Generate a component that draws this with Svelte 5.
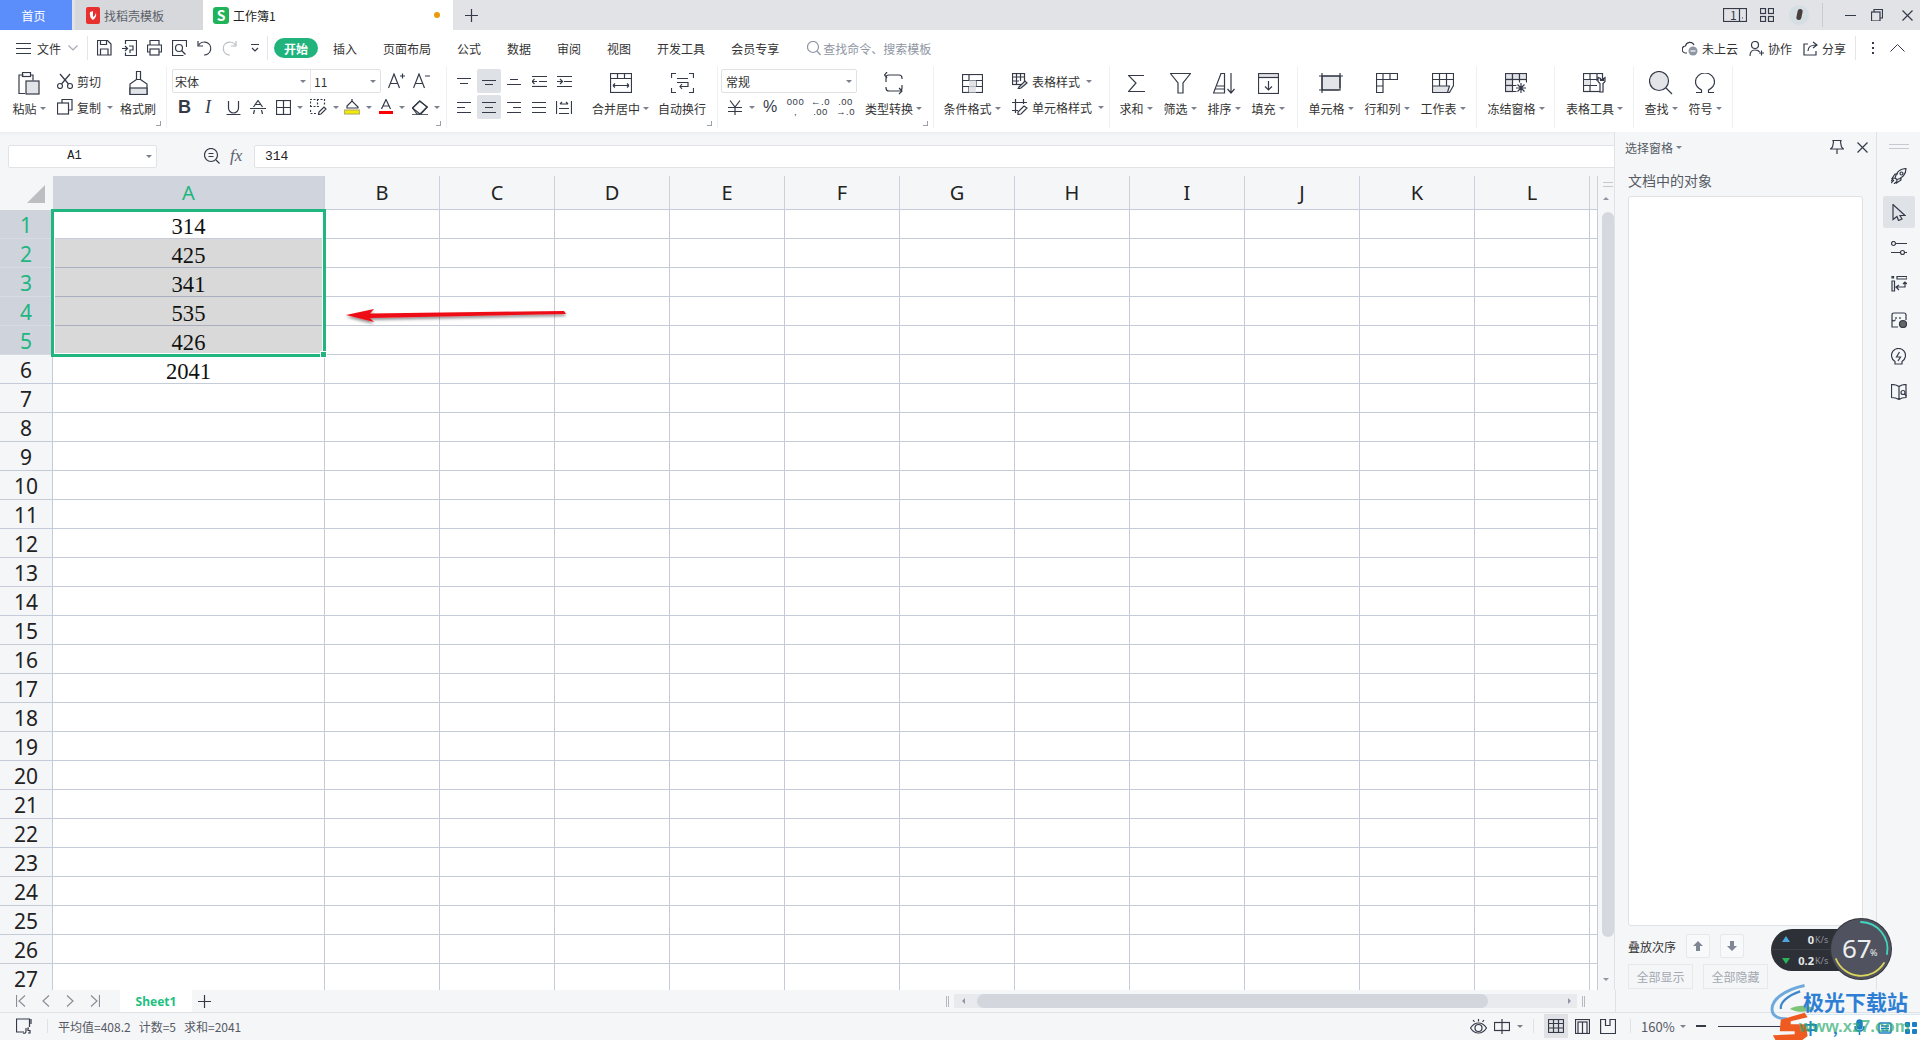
<script>
  const COLS = ['A', 'B', 'C', 'D', 'E', 'F', 'G', 'H', 'I', 'J', 'K', 'L', ''];
  const VALUES = [314, 425, 341, 535, 426, 2041];
  const ROWS = Array.from({ length: 27 }, (_, i) => i + 1);
  const MENU = ['插入', '页面布局', '公式', '数据', '审阅', '视图', '开发工具', '会员专享'];
  const GRAY = '#e2e4e8';

  const ICONS = {
    menu: '<path d="M0 2.5h15M0 7.5h15M0 12.5h15"/>',
    save: '<path d="M.5.5h10l3.5 3.5v11H.5z"/><path d="M3.5.5v4h6v-4M3.5 15v-6h7.500v6"/>',
    saveas: '<path d="M3.500 4V.5h11v15h-11v-3"/><path d="M0 8.500h5M3 6l2.500 2.500L3 11"/><path d="M7 6h4v4H8v3"/>',
    print: '<path d="M3 5V.5h9V5M3 12H.5V5h14v7H12"/><rect x="3" y="9" width="9" height="6"/>',
    preview: '<path d="M14.500 7V.5H.5v15h11"/><circle cx="7" cy="8" r="3.500"/><path d="M9.500 10.500l4 4"/>',
    undo: '<path d="M1 1v5h5"/><path d="M1.500 5.500A6.500 6.500 0 1 1 7 15"/>',
    redo: '<path d="M14 1v5H9"/><path d="M13.500 5.500A6.500 6.500 0 1 0 8 15"/>',
    more: '<path d="M0 .5h8M1 4l3 3 3-3"/>',
    cloud: `<path d="M5 12H4a3.500 3.500 0 0 1-.5-7A4.500 4.500 0 0 1 12 4"/><circle cx="11" cy="10" r="4.500" fill="#8f96a3" stroke="none"/><path d="M8.500 10h5" stroke="#fff"/>`,
    person: '<circle cx="6" cy="4" r="3.500"/><path d="M1 15c0-4 2-6 5-6s4 1 4.500 2M10 12h5M12.500 9.500v5"/>',
    share: '<path d="M5 3H1v11h12v-4"/><path d="M5 10c0-4 3-6 8-6M10 1l4 3-4 3"/>',
    paste: `<path d="M5.500 3H1v18.500h6M12.500 3H15v5.500"/><rect x="4.500" y=".5" width="8" height="4"/><rect x="8" y="9" width="13" height="13" fill="${GRAY}"/>`,
    cut: '<circle cx="3" cy="13" r="2.500"/><circle cx="13" cy="13" r="2.500"/><path d="M4.500 11L13 1M11.500 11L3 1"/>',
    copy: `<path d="M5 4V.5h10V11h-3.500"/><rect x=".5" y="4" width="11" height="11"/>`,
    brush: `<path d="M7.500 .5h4v8h-4zM7.500 8.500L1 13v10.500h17V13l-6.500-4.500"/><rect x="1" y="17" width="17" height="6.500" fill="${GRAY}"/>`,
    aplus: '<path d="M.5 15L6 1l5.500 14M2.500 10.500h7M12 3h5M14.500 .5v5"/>',
    aminus: '<path d="M.5 15L6 1l5.500 14M2.500 10.500h7M12 3h5"/>',
    under: '<path d="M2.500 1v7a5 5 0 0 0 10 0V1M.5 14.500h14"/>',
    strike: '<path d="M3.500 7L8 .5 12.500 7M3.500 14l1-4M12.500 14l-1-4M5.500 4.500h5M0 8.500h16"/>',
    border: '<rect x=".5" y=".5" width="14" height="14"/><path d="M7.500 0v15M0 7.500h15"/>',
    cellstyle: '<path d="M.5 8V.5h14v6M.5 11v3.500H6M7.500 0v8M0 7.500h9" stroke-dasharray="2 1.500"/><path d="M9 13l5-5 2 2-5 5-2.500.5z"/>',
    fill: `<path d="M3 7l5-5 6 6v1H3z"/><path d="M8 0v3"/><rect x=".5" y="11" width="15" height="4" fill="#f4e900" stroke="#b9b26a"/>`,
    fontcolor: '<path d="M2.500 10L7 .5l4.500 9.500M4 7h6" fill="none"/><path d="M0 13.500h14" stroke="#f00" stroke-width="3"/>',
    eraser: `<path d="M.5 9l7-7 8 6-6.500 7H5z"/><path d="M.5 9L8 15l7-7-7-6z" fill="none"/><path d="M0 15.500h16" stroke-width=".8"/>`,
    atop: '<path d="M0 .5h14M3 5.500h8"/>',
    amid: '<path d="M0 3.500h14M3 7.500h8"/>',
    abot: '<path d="M3 2.500h8M0 7.500h14"/>',
    indl: '<path d="M0 .5h15M7 5.500h8M0 5.500h5M2.500 3L0 5.500 2.500 8"/><path d="M0 10.500h15" />',
    indr: '<path d="M0 .5h15M0 5.500h5M3 3l2.500 2.500L3 8M7 5.500h8M0 10.500h15"/>',
    left: '<path d="M0 .5h14M0 5.500h8M0 10.500h14"/>',
    center: '<path d="M0 .5h14M3 5.500h8M0 10.500h14"/>',
    right: '<path d="M0 .5h14M6 5.500h8M0 10.500h14"/>',
    just: '<path d="M0 .5h14M0 5.500h14M0 10.500h14"/>',
    dist: '<path d="M.5 0v13M15.500 0v13M3 12.500h10M3 7.500h10M4 3h8M4 3l2-2M12 3l-2-2"/>',
    merge: '<rect x=".5" y=".5" width="21" height="19"/><path d="M0 5.500h22M7.500 0v5.500M14.500 0v5.500M3 12.500h16M3 12.500l2-2M3 12.500l2 2M19 12.500l-2-2M19 12.500l-2 2"/>',
    wrap: '<path d="M5 .5H.5V5M18 .5h4.500V5M.5 15v4.500H5M22.500 15v4.500H18M6 5.500h11M6 9.500h11v4H9M11 11l-2 2.500 2 2.500"/>',
    yuan: '<path d="M3 .5l5 6.500 5-6.500M1 7.500h14M1 11.500h14M8 7v8"/>',
    convert: '<path d="M2 10V5.500Q2 3 5 3h10q3 0 3 3v1M3 0L.5 3 3 6"/><path d="M18 13v3q0 3-3 3H5q-3 0-3-3v-1M15 16l3 3-3 3"/>',
    cond: `<rect x=".5" y=".5" width="20" height="18"/><path d="M0 6.500h21M0 12.500h21M7 0v6.500M14 6.500V13M7 13v6"/><rect x="7" y="6.500" width="7" height="6" fill="${GRAY}" stroke="none"/><rect x="7" y="12.500" width="7" height="6" fill="${GRAY}" stroke="none"/>`,
    tstyle: '<rect x=".5" y=".5" width="12" height="11"/><path d="M4.500 0v11M8.500 0v8M0 4h12M0 8h7"/><path d="M7 14l6-6 2 2-6 5-3 1z" fill="#e2e4e8"/>',
    ustyle: '<path d="M3.500 0v14M11.500 0v5M0 3.500h15M0 11.500h6"/><path d="M6 13l6-6 3 2-6 6-3 .5z"/>',
    sum: '<path d="M16 .5H.5L8 8 .5 16.500H17"/>',
    filter: '<path d="M.5 .5h20L13 10v10H8V10z"/>',
    sort: `<path d="M.5 20L8 .5h3.500V20z"/><path d="M4 13h7.500M2 16h9.500" /><path d="M18 0v19.500M14.500 16l3.500 4 3.500-4"/>`,
    fillbtn: `<rect x=".5" y=".5" width="20" height="20"/><rect x=".5" y=".5" width="20" height="4" fill="${GRAY}"/><path d="M10.500 8v9M7 13.500l3.500 3.500 3.500-3.500"/>`,
    cell: `<rect x="3" y="3" width="18" height="14" fill="${GRAY}"/><path d="M0 3h24M0 17h20M3 0v20M21 0v15"/>`,
    rowcol: `<path d="M.5 .5h21v6H7v13H.5zM.5 6.500H7M7 0v6.500M14 0v6.500M0 13h7"/>`,
    sheet: `<path d="M.5 .5h21v12l-4 7H.5z"/><path d="M.5 13h17l-2 6.500H.5z" fill="${GRAY}"/><path d="M7.500 0v13M14.500 0v13M0 6.500h21"/>`,
    freeze: `<rect x=".5" y=".5" width="7" height="6" fill="${GRAY}"/><rect x="7.500" y=".5" width="7" height="6" fill="${GRAY}"/><rect x="14.500" y=".5" width="7" height="6" fill="${GRAY}"/><rect x=".5" y="6.500" width="7" height="6" fill="${GRAY}"/><rect x=".5" y="12.500" width="7" height="6" fill="${GRAY}"/><path d="M7.500 18.500h4M21.500 6.500v3M7.500 12.500h4M14.500 6.500v3M16 10v10M11 15h10M12.500 11.500l7 7M19.500 11.500l-7 7"/>`,
    ttools: `<rect x=".5" y=".5" width="19" height="18"/><path d="M0 6.500h20M0 12.500h14M7 0v19M14 0v8"/><rect x="1" y="7" width="6" height="5" fill="${GRAY}" stroke="none"/><path d="M15 4.500v4l2 2V19h3v-8.500l2-2v-4l-1.500 1v2h-3v-2z" fill="#fff"/>`,
    find: `<circle cx="10" cy="10" r="9.500" fill="${GRAY}"/><path d="M17 17l6 6"/>`,
    omega: '<path d="M1 19.500h5.500v-2.500C3 15 .5 12.500 .5 9a9.500 9 0 0 1 19 0c0 3.500-2.500 6-6 8v2.500H19"/>',
    zoomf: '<circle cx="7" cy="7" r="6.500"/><path d="M4.500 5.500h5M4.500 8.500h5M12 12l3.500 3.500"/>',
    pin: '<path d="M3 .5h8l-.5 1.500 1 5 2 2H.5l2-2 1-5zM7 9.500V14"/>',
    close: '<path d="M.5 .5l10 10M10.500 .5l-10 10"/>',
    rocket: '<path d="M4 10C5 5 9 1 15 .5c0 6-4 10-9 11zM4 10l-3 .5 3-4.500h3M6 11.500L5.500 15l4.500-3V9"/><circle cx="10.500" cy="5.500" r="1.500"/><path d="M0 15l3-3M2 11l-2 2M5 14l-2 2"/>',
    cursor: '<path d="M1 .5v15l4-3 1.500 4 3.500-1.500-2-3.500h5z"/>',
    sliders: '<circle cx="2.500" cy="2.500" r="2"/><circle cx="11.500" cy="11.500" r="2"/><path d="M5 2.500h11M0 11.500h9M14 11.500h2"/>',
    swap: '<path d="M1 .5h1.500V2H1zM1 5h2.500v10H1zM6 .5h10V3H6zM5 11h9V6M12 8l2-2 2 2M8 9l-3 2 3 3"/>',
    shop: '<path d="M1 8V3q0-2 2-2h10q2 0 2 2v5M1 8v7h6M1 8q2 2 3.500-.5M5 5v2M9 5v2"/><circle cx="12" cy="12" r="3.500" fill="#666"/>',
    bolt: '<path d="M4 13.500a7 7 0 1 1 7 0V16H4zM8.500 4L5.500 9h4l-2.500 4"/>',
    book: '<path d="M8 2.500C6 1 3 .5.5 .5v13c2.500 0 5 .5 7.500 2 2-1.500 4-2 7-2V.5c-3 0-5 .5-7 2zM8 2.500v13"/><circle cx="12" cy="8.500" r="2" /><path d="M13.500 10l2 2"/>',
    first: '<path d="M.5 0v12M9 .5L3 6l6 5.500"/>',
    prev: '<path d="M7 .5L1 6l6 5.500"/>',
    next: '<path d="M1 .5L7 6l-6 5.500"/>',
    last: '<path d="M9.500 0v12M1 .5L7 6l-6 5.500"/>',
    plus: '<path d="M6.500 0v13M0 6.500h13"/>',
    macro: '<path d="M8 14H.5V1h13v8M15 1v5"/><path d="M7 15q3 1 3-2v-3M13 10h-1v2.500h2V15h-2"/>',
    eye: '<path d="M.5 9C3 5 5.500 4 8.500 4s5.500 1 8 5c-2.500 4-5 5-8 5s-5.500-1-8-5zM8.500 0v2.500M3 1l1.500 2M14 1l-1.500 2"/><circle cx="8.500" cy="9" r="3.500"/>',
    ime: '<rect x=".5" y="3.500" width="15" height="8"/><path d="M8 0v15"/>',
    vnormal: '<rect x=".5" y=".5" width="15" height="13"/><path d="M0 4.500h16M0 9h16M5.500 0v14M10.500 0v14"/>',
    vlayout: '<rect x=".5" y=".5" width="14" height="14"/><rect x="3" y="3" width="9" height="12" /><path d="M7.500 3v12"/>',
    vbreak: '<path d="M.5 14.500V.5h5v6H10V.5h5.500v14z"/><path d="M.5 .5v14"/>',
    boxone: '<rect x=".5" y=".5" width="23" height="13"/><path d="M16.500 0v14"/><path d="M19 10h1"/>',
    grid4: '<rect x=".5" y=".5" width="5" height="5"/><rect x="8.500" y=".5" width="5" height="5"/><rect x=".5" y="8.500" width="5" height="5"/><rect x="8.500" y="8.500" width="5" height="5"/>',
    restore: '<path d="M3 3V.5h8.500V9H9"/><rect x=".5" y="3" width="8.500" height="9"/>'
  };
</script>

{#snippet ic(name, w, h, cls = '')}
  <svg class="ic {cls}" width={w} height={h} viewBox="0 0 {w} {h}" fill="none" stroke="#343a48" stroke-width="1.2">{@html ICONS[name]}</svg>
{/snippet}

{#snippet big(label, icon, w, iw, ih, caret = true)}
  <div class="big" style:width="{w}px">
    <div class="big-icon">{@render ic(icon, iw, ih)}</div>
    <div class="big-label">{label}{#if caret}<i class="caret"></i>{/if}</div>
  </div>
{/snippet}

{#snippet tbtn(icon, w, h, caret = false, cw = 34)}
  <div class="tbtn" style:width="{cw}px">{@render ic(icon, w, h)}{#if caret}<i class="caret"></i>{/if}</div>
{/snippet}

<div class="app">
  <header class="tabs">
    <div class="tab home">首页</div>
    <div class="tab tpl">
      <svg class="ic" width="14" height="17" viewBox="0 0 14 17"><rect width="14" height="17" rx="2" fill="#e8302f"/><path d="M4 5q-1 5 3 8 4-3 3-7-1 3-3 4 0-3 0-6-2 1-3 1z" fill="#fff"/></svg>
      找稻壳模板
    </div>
    <div class="tab book"><span class="s-logo">S</span>工作簿1<span class="dot"></span></div>
    <div class="newtab">{@render ic('plus', 13, 13)}</div>
    <div class="win">
      <div class="boxone">{@render ic('boxone', 24, 14)}<span>1</span></div>
      {@render ic('grid4', 14, 14)}
      <div class="avatar"><span></span></div>
      <div class="vline"></div>
      <div class="minbtn"></div>
      {@render ic('restore', 12, 12)}
      {@render ic('close', 11, 11)}
    </div>
  </header>

  <nav class="menubar">
    <div class="filemenu">{@render ic('menu', 15, 15)}<span>文件</span><svg class="ic" width="10" height="6" viewBox="0 0 10 6" fill="none" stroke="#a2a7b0" stroke-width="1.100"><path d="M.5 .5L5 5 9.500 .5"/></svg></div>
    <div class="mline one"></div>
    <div class="quick">
      {@render ic('save', 15, 16)}
      {@render ic('saveas', 15, 16)}
      {@render ic('print', 15, 16)}
      {@render ic('preview', 15, 16)}
      {@render ic('undo', 15, 16)}
      <svg class="ic" width="15" height="16" viewBox="0 0 15 16" fill="none" stroke="#b8bcc4" stroke-width="1.200">{@html ICONS.redo}</svg>
      {@render ic('more', 8, 8)}
    </div>
    <div class="mline"></div>
    <div class="pill">开始</div>
    <div class="menu-items">
      {#each MENU as m}<span>{m}</span>{/each}
    </div>
    <div class="search">
      <svg class="ic" width="14" height="15" viewBox="0 0 14 15" fill="none" stroke="#8f96a3" stroke-width="1.200"><circle cx="6" cy="6" r="5.500"/><path d="M10 10l3.500 4"/></svg>
      查找命令、搜索模板
    </div>
    <div class="actions">
      <span class="act">{@render ic('cloud', 16, 15)}未上云</span>
      <span class="act">{@render ic('person', 15, 15)}协作</span>
      <span class="act">{@render ic('share', 15, 15)}分享</span>
      <div class="mline act-line"></div>
      <span class="dots"></span>
      <svg class="ic" width="15" height="8" viewBox="0 0 15 8" fill="none" stroke="#343a48" stroke-width="1"><path d="M.5 7.500L7.500 .5l7 7"/></svg>
    </div>
  </nav>

  <section class="ribbon">
    <div class="grp g1">
      {@render big('粘贴', 'paste', 40, 22, 23)}
      <div class="smalls cutcol">
        <div class="sm">{@render ic('cut', 16, 16)}<span>剪切</span></div>
        <div class="sm">{@render ic('copy', 16, 16)}<span>复制</span><i class="caret"></i></div>
      </div>
      {@render big('格式刷', 'brush', 44, 19, 24, false)}
      <i class="launch"></i>
    </div>

    <div class="grp g2">
      <div class="smalls">
        <div class="fontrow">
          <div class="selectbox font">
            <div class="sel-a">宋体<i class="caret"></i></div>
            <div class="sel-b">11<i class="caret"></i></div>
          </div>
          <div class="fontsize">{@render ic('aplus', 18, 16)}{@render ic('aminus', 18, 16)}</div>
        </div>
        <div class="fmtrow">
          <span class="bold-b">B</span>
          <span class="ital-i">I</span>
          {@render tbtn('under', 15, 15, false, 24)}
          {@render tbtn('strike', 16, 15, false, 26)}
          {@render tbtn('border', 15, 15, true, 34)}
          {@render tbtn('cellstyle', 17, 16, true, 34)}
          {@render tbtn('fill', 16, 16, true, 35)}
          {@render tbtn('fontcolor', 14, 16, true, 33)}
          {@render tbtn('eraser', 16, 16, true, 34)}
        </div>
      </div>
      <i class="launch"></i>
    </div>

    <div class="grp g3">
      <div class="aligns">
        <div class="ab">{@render ic('atop', 14, 7)}</div>
        <div class="ab on">{@render ic('amid', 14, 9)}</div>
        <div class="ab">{@render ic('abot', 14, 9)}</div>
        <div class="ab">{@render ic('indl', 15, 11)}</div>
        <div class="ab">{@render ic('indr', 15, 11)}</div>
        <div class="ab">{@render ic('left', 14, 11)}</div>
        <div class="ab on">{@render ic('center', 14, 11)}</div>
        <div class="ab">{@render ic('right', 14, 11)}</div>
        <div class="ab">{@render ic('just', 14, 11)}</div>
        <div class="ab">{@render ic('dist', 16, 13)}</div>
      </div>
      {@render big('合并居中', 'merge', 69, 22, 20)}
      {@render big('自动换行', 'wrap', 54, 23, 20, false)}
      <i class="launch"></i>
    </div>

    <div class="grp g4">
      <div class="smalls numcol">
        <div class="selectbox num">常规<i class="caret"></i></div>
        <div class="numrow">
          {@render tbtn('yuan', 16, 15, true, 36)}
          <span class="pct">%</span>
          <span class="dec thou">000<br />,</span>
          <span class="dec">←.0<br />.00</span>
          <span class="dec">.00<br />→.0</span>
        </div>
      </div>
      {@render big('类型转换', 'convert', 69, 20, 23)}
      <i class="launch"></i>
    </div>

    <div class="grp g5">
      {@render big('条件格式', 'cond', 70, 21, 19)}
      <div class="smalls">
        <div class="sm">{@render ic('tstyle', 16, 16)}<span>表格样式</span><i class="caret"></i></div>
        <div class="sm">{@render ic('ustyle', 16, 16)}<span>单元格样式</span><i class="caret"></i></div>
      </div>
    </div>

    <div class="grp g6">
      {@render big('求和', 'sum', 44, 17, 17)}
      {@render big('筛选', 'filter', 44, 21, 21)}
      {@render big('排序', 'sort', 44, 22, 21)}
      {@render big('填充', 'fillbtn', 44, 21, 21)}
    </div>
    <div class="grp g7">
      {@render big('单元格', 'cell', 56, 24, 20)}
      {@render big('行和列', 'rowcol', 56, 22, 20)}
      {@render big('工作表', 'sheet', 56, 22, 20)}
    </div>
    <div class="grp g8">{@render big('冻结窗格', 'freeze', 78, 22, 21)}</div>
    <div class="grp g9">{@render big('表格工具', 'ttools', 79, 23, 20)}</div>
    <div class="grp g10">
      {@render big('查找', 'find', 44, 24, 24)}
      {@render big('符号', 'omega', 44, 20, 20)}
    </div>
  </section>

  <section class="formula">
    <div class="namebox">A1<i class="caret"></i></div>
    {@render ic('zoomf', 16, 16)}
    <span class="fx">fx</span>
    <div class="finput">314</div>
  </section>

  <main class="workspace">
    <div class="sheetcol">
      <div class="gridwrap">
        <div class="grid">
          <div class="corner"><span></span></div>
          {#each COLS as c, i}
            <div class="colh" class:sel={i === 0}>{c}</div>
          {/each}
          {#each ROWS as r}
            <div class="rowh" class:sel={r <= 5}>{r}</div>
            {#each COLS as c, i}
              <div class="cell" class:gray={i === 0 && r >= 2 && r <= 5}>{i === 0 && VALUES[r - 1] ? VALUES[r - 1] : ''}</div>
            {/each}
          {/each}
        </div>
        <div class="selection"><span class="handle"></span></div>
        <svg class="arrow" width="226" height="24" viewBox="0 0 226 24">
          <defs><filter id="sh" x="-5%" y="-50%" width="110%" height="220%"><feDropShadow dx="0" dy="2" stdDeviation="1.500" flood-color="#000" flood-opacity=".45"/></filter></defs>
          <polygon points="2,11 30,5 26,9.500 220,7 222,10 26,14 30,18" fill="#ee0f16" filter="url(#sh)"/>
        </svg>
      </div>
      <div class="vscroll">
        <span class="grip"></span>
        <i class="up"></i>
        <span class="thumb"></span>
        <i class="down"></i>
      </div>
    </div>

    <aside class="pane">
      <div class="pane-head"><span>选择窗格</span><i class="caret"></i><span class="pane-tools">{@render ic('pin', 14, 15)}{@render ic('close', 11, 11)}</span></div>
      <div class="pane-title">文档中的对象</div>
      <div class="pane-list"></div>
      <div class="order">
        <span>叠放次序</span>
        <b class="ordb"><svg width="12" height="12" viewBox="0 0 12 12"><path d="M6 1l5 5H8v5H4V6H1z" fill="#7f8794"/></svg></b>
        <b class="ordb"><svg width="12" height="12" viewBox="0 0 12 12"><path d="M6 11l5-5H8V1H4v5H1z" fill="#7f8794"/></svg></b>
      </div>
      <div class="showrow"><span>全部显示</span><span>全部隐藏</span></div>
    </aside>

    <aside class="rail">
      <span class="rail-grip"></span>
      <div class="rb">{@render ic('rocket', 16, 16)}</div>
      <div class="rb on">{@render ic('cursor', 14, 17)}</div>
      <div class="rb">{@render ic('sliders', 16, 14)}</div>
      <div class="rb">{@render ic('swap', 16, 16)}</div>
      <div class="rb">{@render ic('shop', 16, 16)}</div>
      <div class="rb">{@render ic('bolt', 15, 17)}</div>
      <div class="rb">{@render ic('book', 16, 16)}</div>
    </aside>
  </main>

  <div class="sheetbar">
    <div class="sheetbar-in">
      <div class="sheetnav">
        {@render ic('first', 10, 12)}
        {@render ic('prev', 8, 12)}
        {@render ic('next', 8, 12)}
        {@render ic('last', 10, 12)}
      </div>
      <div class="sheettab">Sheet1</div>
      {@render ic('plus', 13, 13)}
      <div class="hscroll">
        <span class="hgrip"></span>
        <div class="htrack"><i class="hl"></i><span class="hthumb"></span><i class="hr"></i></div>
        <span class="hgrip"></span>
      </div>
    </div>
  </div>

  <footer class="status">
    {@render ic('macro', 16, 16)}
    <div class="stline"></div>
    <div class="sttext"><span>平均值=408.2</span><span>计数=5</span><span>求和=2041</span></div>
    <div class="stright">
      {@render ic('eye', 17, 15)}
      <div class="imebtn">{@render ic('ime', 16, 15)}<i class="caret"></i></div>
      <div class="stline"></div>
      <div class="views">
        <div class="vb on">{@render ic('vnormal', 16, 14)}</div>
        <div class="vb">{@render ic('vlayout', 15, 15)}</div>
        <div class="vb">{@render ic('vbreak', 16, 15)}</div>
      </div>
      <div class="stline"></div>
      <div class="zoomval">160%<i class="caret"></i></div>
      <span class="zminus"></span>
      <span class="zline"></span>
    </div>
  </footer>

  <div class="speed">
    <div class="speed-pill">
      <div class="sp-row"><i class="sp-up"></i><b>0</b><em>K/s</em></div>
      <div class="sp-row"><i class="sp-down"></i><b>0.2</b><em>K/s</em></div>
    </div>
    <div class="speed-dial">
      <svg width="60" height="60" viewBox="0 0 60 60" fill="none" stroke-width="1.800" stroke-linecap="round">
        <path d="M30 3A27 27 0 0 1 56 35" stroke="#41d7bf"/>
        <path d="M53 44A27 27 0 0 1 5 40" stroke="#dcd75a"/>
      </svg>
      <span class="pctnum">67</span><span class="pctsign">%</span>
    </div>
  </div>

  <div class="ime-bar">
    <b>中</b><span class="ime-comma">,</span>
    <svg width="11" height="17" viewBox="0 0 11 17" fill="none" stroke="#1d7fc4" stroke-width="1.500"><rect x="3" y="1" width="5" height="9" rx="2.500" fill="#1d7fc4"/><path d="M1 7q0 5 4.500 5T10 7M5.500 12v4"/></svg>
    <svg width="14" height="12" viewBox="0 0 14 12" fill="none" stroke="#1d7fc4" stroke-width="1.500"><rect x="1" y="1" width="12" height="10" rx="1"/><path d="M3 4h8M3 6.500h8M4 9h6"/></svg>
    <svg width="12" height="12" viewBox="0 0 12 12" fill="#1d7fc4"><rect width="5" height="5" rx="1"/><rect x="7" width="5" height="5" rx="1"/><rect y="7" width="5" height="5" rx="1"/><rect x="7" y="7" width="5" height="5" rx="1"/></svg>
  </div>
  <div class="mark">
    <svg class="mark-logo" width="70" height="76" viewBox="0 0 70 76" fill="none">
      <path d="M48 2C20 8 2 22 4 36c1 8 10 12 20 11" stroke="#6fa9dc" stroke-width="4"/>
      <path d="M42 10C24 16 14 26 16 34" stroke="#3d86cc" stroke-width="3"/>
      <path d="M28 34c10-6 24-6 34 0-8 4-22 6-34 0z" fill="#7cc576"/>
      <path d="M22 48l24-9 3 6-17 5v4h15l2 15-6 6-26 0-3-7 22-1v-4H21z" fill="#ee5a1f" transform="translate(-14 -2) scale(1.350 1.050)"/>
    </svg>
    <span class="mark-name">极光下载站</span>
    <span class="mark-url">www.xz7.com</span>
  </div>
</div>

<style>
  :global(body) {
    margin: 0;
    background: #fff;
    font-family: "Noto Sans CJK SC", "Noto Sans", sans-serif;
  }

  .app {
    position: relative;
    display: flex;
    flex-direction: column;
    width: 1920px;
    height: 1040px;
    overflow: hidden;
    font-size: 12px;
    color: #3b3f48;
  }

  .ic {
    display: block;
    flex-shrink: 0;
  }

  .caret {
    display: inline-block;
    flex-shrink: 0;
    width: 0;
    height: 0;
    margin-left: 3px;
    border-left: 3px solid transparent;
    border-right: 3px solid transparent;
    border-top: 3px solid #7b818c;
    vertical-align: middle;
  }

  /* title tabs */
  .tabs {
    display: flex;
    flex-shrink: 0;
    height: 30px;
    background: #e1e3e7;
  }

  .tab {
    display: flex;
    align-items: center;
    height: 30px;
    box-sizing: border-box;
  }

  .home {
    justify-content: center;
    width: 72px;
    margin-right: 3px;
    padding-right: 5px;
    background: #5c8efb;
    color: #fff;
  }

  .tpl {
    width: 128px;
    padding-left: 11px;
    background: #d6d8dc;
    color: #5b6068;
    gap: 4px;
  }

  .book {
    position: relative;
    width: 250px;
    padding-left: 10px;
    background: #fff;
    color: #222;
    gap: 4px;
  }

  .s-logo {
    display: flex;
    align-items: center;
    justify-content: center;
    width: 16px;
    height: 17px;
    border-radius: 3px;
    background: #1fb45a;
    color: #fff;
    font-size: 14px;
    font-weight: 700;
    line-height: 1;
  }

  .dot {
    width: 6px;
    height: 6px;
    margin-left: auto;
    margin-right: 13px;
    border-radius: 50%;
    background: #e89c0c;
  }

  .newtab {
    display: flex;
    align-items: center;
    margin-left: 12px;
  }

  .win {
    display: flex;
    align-items: center;
    margin-left: auto;
    margin-right: 7px;
    gap: 13px;
  }

  .boxone {
    position: relative;
  }

  .boxone span {
    position: absolute;
    left: 7px;
    top: -2px;
    font-size: 12px;
    color: #343a48;
  }

  .avatar {
    position: relative;
    width: 20px;
    height: 20px;
    margin-left: 2px;
    overflow: hidden;
    border-radius: 50%;
    background: #d5dfe3;
  }

  .avatar span {
    position: absolute;
    left: 8px;
    top: 4px;
    width: 5px;
    height: 11px;
    border-radius: 3px;
    background: #4a3d3e;
    transform: rotate(12deg);
  }

  .vline {
    width: 1px;
    height: 24px;
    background: #c8cbd0;
  }

  .minbtn {
    width: 11px;
    height: 1px;
    margin-left: 9px;
    margin-right: 2px;
    background: #343a48;
  }

  .win > :global(svg:last-child) {
    margin-left: 6px;
  }

  /* menu row */
  .menubar {
    display: flex;
    flex-shrink: 0;
    align-items: center;
    height: 34px;
    padding: 2px 0 0 16px;
    box-sizing: border-box;
    background: #fff;
    color: #333;
  }

  .filemenu {
    display: flex;
    align-items: center;
    gap: 6px;
  }

  .filemenu svg:last-child {
    margin-left: 1px;
  }

  .mline {
    width: 1px;
    height: 24px;
    background: #e3e5e8;
  }

  .mline.one {
    margin-left: 9px;
  }

  .quick {
    display: flex;
    align-items: center;
    gap: 10px;
    margin: 0 8px 0 9px;
  }

  .quick :global(svg:last-child) {
    margin-left: 4px;
  }

  .pill {
    display: flex;
    align-items: center;
    justify-content: center;
    width: 44px;
    height: 20px;
    margin-left: 6px;
    border-radius: 10px;
    background: #20b47c;
    color: #fff;
    font-weight: 700;
  }

  .menu-items {
    display: flex;
    gap: 26px;
    margin-left: 15px;
  }

  .search {
    display: flex;
    align-items: center;
    gap: 2px;
    margin-left: 28px;
    color: #8f96a3;
  }

  .actions {
    display: flex;
    align-items: center;
    margin-left: auto;
    margin-right: 15px;
    gap: 11px;
  }

  .act {
    display: flex;
    align-items: center;
    gap: 4px;
  }

  .act-line {
    margin-left: -2px;
  }

  .dots {
    width: 2px;
    height: 2px;
    margin: 0 5px 0 5px;
    background: #343a48;
    box-shadow: 0 -5px 0 #343a48, 0 5px 0 #343a48;
  }

  /* ribbon */
  .ribbon {
    display: flex;
    flex-shrink: 0;
    height: 68px;
    background: #fff;
    box-sizing: border-box;
    color: #333;
  }

  .grp {
    position: relative;
    display: flex;
    box-sizing: border-box;
    height: 62px;
    margin-top: 2px;
    padding-top: 3px;
    border-right: 1px solid #eff0f2;
  }

  .g1 { width: 167px; padding-left: 9px; }
  .g2 { width: 280px; padding-left: 5px; }
  .g3 { width: 271px; padding-left: 5px; }
  .g4 { width: 216px; padding-left: 3px; }
  .g5 { width: 176px; padding-left: 3px; }
  .g6 { width: 188px; padding-left: 4px; }
  .g7 { width: 179px; padding-left: 5px; }
  .g8 { width: 78px; }
  .g9 { width: 79px; }
  .g10 { width: 99px; padding-left: 5px; border-right-color: #eff0f2; }

  .big {
    display: flex;
    flex-direction: column;
    align-items: center;
    flex-shrink: 0;
  }

  .big-icon {
    display: flex;
    align-items: center;
    justify-content: center;
    height: 28px;
  }

  .big-label {
    display: flex;
    align-items: center;
    height: 22px;
    white-space: nowrap;
  }

  .smalls {
    display: flex;
    flex-direction: column;
    gap: 2px;
  }

  .sm {
    display: flex;
    align-items: center;
    height: 24px;
    gap: 4px;
    white-space: nowrap;
  }

  .sm .caret {
    margin-left: 2px;
  }

  .cutcol {
    width: 59px;
    margin-left: 8px;
  }

  .launch {
    position: absolute;
    right: 5px;
    bottom: 2px;
    width: 4px;
    height: 4px;
    border-right: 1px solid #9ba1ab;
    border-bottom: 1px solid #9ba1ab;
  }

  .selectbox {
    display: flex;
    align-items: center;
    box-sizing: border-box;
    height: 24px;
    border: 1px solid #dfe1e5;
    border-radius: 2px;
    background: #fff;
  }

  .fontrow {
    display: flex;
    height: 24px;
  }

  .font {
    width: 209px;
  }

  .sel-a,
  .sel-b {
    display: flex;
    align-items: center;
    justify-content: space-between;
    padding: 0 4px 0 2px;
    box-sizing: border-box;
  }

  .sel-a {
    width: 138px;
    height: 22px;
    border-right: 1px solid #e4e6e9;
  }

  .sel-b {
    width: 69px;
    padding-left: 3px;
  }

  .fontsize {
    display: flex;
    align-items: center;
    gap: 7px;
    margin-left: 7px;
  }

  .fmtrow {
    display: flex;
    align-items: center;
    height: 24px;
  }

  .bold-b {
    width: 27px;
    padding-left: 6px;
    box-sizing: border-box;
    color: #343a48;
    font: 700 18px "Liberation Sans", sans-serif;
  }

  .ital-i {
    width: 27px;
    padding-left: 6px;
    box-sizing: border-box;
    color: #343a48;
    font: italic 400 18px "Liberation Serif", serif;
  }

  .tbtn {
    display: flex;
    align-items: center;
    gap: 3px;
    flex-shrink: 0;
  }

  .aligns {
    display: grid;
    grid-template-columns: repeat(5, 25px);
    grid-auto-rows: 24px;
    row-gap: 2px;
    width: 126px;
    margin-right: 8px;
    padding-left: 0;
  }

  .ab {
    display: flex;
    align-items: center;
    justify-content: center;
    width: 24px;
    border-radius: 2px;
  }

  .ab.on {
    background: #dee1e5;
  }

  .numcol {
    width: 140px;
  }

  .num {
    justify-content: space-between;
    width: 136px;
    padding: 0 4px;
  }

  .numrow {
    display: flex;
    align-items: center;
    height: 24px;
    padding-left: 6px;
  }

  .pct {
    width: 20px;
    color: #343a48;
    font: 16px "Liberation Sans", sans-serif;
  }

  .dec {
    width: 25px;
    color: #343a48;
    font: 9.500px/10px "Liberation Sans", sans-serif;
    letter-spacing: .5px;
    text-align: center;
  }

  .thou {
    font-weight: 400;
  }

  .g4 .big {
    margin-left: -2px;
  }

  .g5 .smalls {
    margin-left: 5px;
  }

  /* formula bar */
  .formula {
    display: flex;
    flex-shrink: 0;
    align-items: center;
    height: 44px;
    padding: 4px 0 0 8px;
    box-sizing: border-box;
    background: linear-gradient(#eceef0 0, #f5f6f8 4px);
  }

  .namebox {
    position: relative;
    display: flex;
    align-items: center;
    justify-content: center;
    width: 149px;
    height: 23px;
    margin-right: 47px;
    padding-right: 16px;
    box-sizing: border-box;
    border: 1px solid #e1e3e6;
    border-radius: 2px;
    background: #fff;
    color: #222;
    font: 12px "Liberation Mono", monospace;
  }

  .namebox .caret {
    position: absolute;
    right: 4px;
    top: 9px;
  }

  .fx {
    margin: 0 8px 0 10px;
    width: 16px;
    color: #5a606c;
    font: italic 17px "Liberation Serif", serif;
  }

  .finput {
    display: flex;
    align-items: center;
    width: 1362px;
    height: 23px;
    padding-left: 10px;
    box-sizing: border-box;
    border: 1px solid #e1e3e6;
    border-radius: 2px;
    background: #fff;
    color: #222;
    font: 13px "Liberation Mono", monospace;
  }

  /* sheet */
  .workspace {
    display: flex;
    flex-shrink: 0;
    height: 814px;
    background: #f5f6f8;
  }

  .sheetcol {
    display: flex;
    width: 1614px;
    box-sizing: border-box;
  }

  .gridwrap {
    position: relative;
    width: 1598px;
    overflow: hidden;
  }

  .grid {
    display: grid;
    grid-template-columns: 53px 272px repeat(11, 115px) 8px;
    grid-template-rows: 34px;
    grid-auto-rows: 29px;
  }

  .corner {
    display: flex;
    align-items: flex-end;
    justify-content: flex-end;
    padding: 0 7px 7px 0;
    border-right: 1px solid transparent;
  }

  .corner span {
    width: 0;
    height: 0;
    border-left: 18px solid transparent;
    border-bottom: 18px solid #bcbec2;
  }

  .colh {
    display: flex;
    align-items: center;
    justify-content: center;
    box-sizing: border-box;
    border-right: 1px solid #cdd1dc;
    border-bottom: 1px solid #c6cbd9;
    color: #222;
    font: 20px "Noto Sans", sans-serif;
  }

  .colh.sel {
    background: #d0d4dc;
    color: #21b67f;
  }

  .rowh {
    display: flex;
    align-items: center;
    justify-content: center;
    box-sizing: border-box;
    padding-top: 1px;
    border-right: 1px solid #c6cbd9;
    border-bottom: 1px solid #c6cbd9;
    color: #222;
    font: 21px "Noto Sans", sans-serif;
  }

  .rowh.sel {
    background: #cfd3dc;
    border-bottom-color: #d8dbe3;
    color: #21b67f;
  }

  .cell {
    display: flex;
    align-items: flex-end;
    justify-content: center;
    box-sizing: border-box;
    border-right: 1px solid #c6cbd9;
    border-bottom: 1px solid #c6cbd9;
    background: #fff;
    color: #111;
    font: 22.600px/23px "Liberation Serif", serif;
  }

  .cell.gray {
    background: #d9d9d9;
    border-bottom-color: #a9afc0;
  }

  .selection {
    position: absolute;
    left: 51px;
    top: 33px;
    width: 275px;
    height: 148px;
    box-sizing: border-box;
    border: 3px solid #21b67f;
    box-shadow: inset 0 0 0 1px #fff;
  }

  .handle {
    position: absolute;
    right: -4px;
    bottom: -4px;
    width: 5px;
    height: 5px;
    border: 1px solid #fff;
    background: #21b67f;
  }

  .arrow {
    position: absolute;
    left: 344px;
    top: 128px;
  }

  .vscroll {
    position: relative;
    width: 16px;
    background: #f5f6f8;
  }

  .grip,
  .rail-grip {
    position: absolute;
    height: 3px;
    border-top: 1px solid #c6cad0;
    border-bottom: 1px solid #c6cad0;
  }

  .grip {
    left: 5px;
    top: 6px;
    width: 10px;
  }

  .up,
  .down {
    position: absolute;
    left: 5px;
    width: 0;
    height: 0;
    border-left: 3px solid transparent;
    border-right: 3px solid transparent;
  }

  .up {
    top: 21px;
    border-bottom: 3px solid #8f96a3;
  }

  .down {
    top: 802px;
    border-top: 3px solid #8f96a3;
  }

  .thumb {
    position: absolute;
    left: 4px;
    top: 36px;
    width: 12px;
    height: 725px;
    border-radius: 6px;
    background: #d5d8de;
  }

  /* task pane */
  .pane {
    display: flex;
    flex-direction: column;
    width: 262px;
    margin-top: -44px;
    box-sizing: border-box;
    padding: 4px 13px 0;
    border-left: 1px solid #e0e2e6;
    background: #f5f6f8;
  }

  .pane-head {
    display: flex;
    align-items: center;
    height: 22px;
    margin-left: -3px;
    color: #555a64;
  }

  .pane-tools {
    display: flex;
    align-items: center;
    gap: 13px;
    margin-left: auto;
    margin-right: -5px;
  }

  .pane-title {
    margin-top: 10px;
    height: 24px;
    color: #555a64;
    font-size: 14px;
    line-height: 24px;
  }

  .pane-list {
    width: 235px;
    height: 730px;
    margin-top: 4px;
    flex-shrink: 0;
    box-sizing: border-box;
    border: 1px solid #dfe1e5;
    border-radius: 3px;
    background: #fff;
  }

  .order {
    display: flex;
    align-items: center;
    height: 24px;
    margin-top: 8px;
    color: #333;
  }

  .ordb {
    display: flex;
    align-items: center;
    justify-content: center;
    width: 22px;
    height: 22px;
    margin-left: 10px;
    border: 1px solid #e6e8eb;
    border-radius: 2px;
    background: #f8f9fa;
  }

  .showrow {
    display: flex;
    gap: 10px;
    margin-top: 6px;
  }

  .showrow span {
    display: flex;
    align-items: center;
    justify-content: center;
    width: 63px;
    height: 23px;
    border: 1px solid #e6e8eb;
    color: #a3a8b0;
  }

  .rail {
    position: relative;
    display: flex;
    flex-direction: column;
    align-items: center;
    width: 44px;
    margin-top: -44px;
    padding-top: 28px;
    box-sizing: border-box;
    border-left: 1px solid #e0e2e6;
    background: #f5f6f8;
  }

  .rail-grip {
    left: 12px;
    top: 12px;
    width: 20px;
  }

  .rb {
    display: flex;
    align-items: center;
    justify-content: center;
    width: 32px;
    height: 32px;
    margin-bottom: 4px;
    border-radius: 2px;
  }

  .rb.on {
    background: #dfe2e7;
  }

  /* sheet tab row */
  .sheetbar {
    flex-shrink: 0;
    height: 22px;
    background: #f5f6f8;
  }

  .sheetbar-in {
    display: flex;
    align-items: center;
    height: 22px;
    width: 1616px;
    box-sizing: border-box;
    border-right: 1px solid #e0e2e6;
  }

  .sheetnav {
    display: flex;
    align-items: center;
    width: 104px;
    padding-left: 16px;
    gap: 16px;
    opacity: .55;
  }

  .sheettab {
    display: flex;
    align-items: center;
    justify-content: center;
    width: 72px;
    height: 22px;
    background: #fff;
    color: #21c07f;
    font: 700 12px "Noto Sans", sans-serif;
    margin-right: 6px;
  }

  .hscroll {
    display: flex;
    align-items: center;
    gap: 5px;
    margin-left: 735px;
  }

  .hgrip {
    width: 3px;
    height: 11px;
    border-left: 1px solid #b5b9c0;
    border-right: 1px solid #b5b9c0;
    box-sizing: border-box;
  }

  .htrack {
    position: relative;
    width: 623px;
    height: 14px;
    background: #e8eaee;
  }

  .hl,
  .hr {
    position: absolute;
    top: 4px;
    width: 0;
    height: 0;
    border-top: 3px solid transparent;
    border-bottom: 3px solid transparent;
  }

  .hl {
    left: 8px;
    border-right: 3px solid #8f96a3;
  }

  .hr {
    right: 6px;
    border-left: 3px solid #8f96a3;
  }

  .hthumb {
    position: absolute;
    left: 23px;
    top: 0;
    width: 511px;
    height: 14px;
    border-radius: 7px;
    background: #d3d6dc;
  }

  /* status */
  .status {
    display: flex;
    flex-shrink: 0;
    align-items: center;
    height: 28px;
    padding: 0 0 1px 16px;
    box-sizing: border-box;
    border-top: 1px solid #e0e2e6;
    background: #f5f6f8;
    color: #555a64;
  }

  .stline {
    width: 1px;
    height: 14px;
    margin: 0 10px 0 15px;
    background: #e0e2e6;
  }

  .sttext {
    display: flex;
    gap: 8px;
  }

  .stright {
    display: flex;
    align-items: center;
    margin-left: auto;
    width: 450px;
  }

  .stright > :global(svg:first-child) {
    margin-right: 7px;
  }

  .imebtn {
    display: flex;
    align-items: center;
    gap: 4px;
  }

  .stright .stline {
    margin: 0 10px 0 10px;
    height: 14px;
  }

  .views {
    display: flex;
    gap: 2px;
  }

  .vb {
    display: flex;
    align-items: center;
    justify-content: center;
    width: 24px;
    height: 24px;
  }

  .vb.on {
    background: #dfe1e5;
  }

  .zoomval {
    display: flex;
    align-items: center;
    gap: 2px;
    font-size: 13px;
  }

  .zminus {
    width: 10px;
    height: 2px;
    margin-left: 10px;
    background: #343a48;
  }

  .zline {
    width: 100px;
    height: 1px;
    margin-left: 12px;
    background: #343a48;
  }

  /* floating things */
  .speed {
    position: absolute;
    left: 1771px;
    top: 919px;
    display: flex;
    align-items: center;
    width: 122px;
    height: 62px;
  }

  .speed-pill {
    display: flex;
    flex-direction: column;
    width: 80px;
    height: 42px;
    padding-right: 20px;
    box-sizing: border-box;
    border-radius: 21px 0 0 21px;
    background: #2d3037;
  }

  .sp-row {
    display: flex;
    align-items: center;
    height: 21px;
    padding-left: 11px;
    box-sizing: border-box;
    color: #e8eaec;
  }

  .sp-row:first-child {
    border-bottom: 1px solid #3c3f46;
  }

  .sp-row b {
    margin-left: auto;
    font: 700 11px "Noto Sans", sans-serif;
  }

  .sp-row em {
    width: 16px;
    margin-left: 1px;
    color: #8b8f97;
    font: normal 9px "Noto Sans", sans-serif;
  }

  .sp-up,
  .sp-down {
    width: 0;
    height: 0;
    border-left: 4px solid transparent;
    border-right: 4px solid transparent;
  }

  .sp-up {
    border-bottom: 6px solid #4aa8e0;
  }

  .sp-down {
    border-top: 6px solid #2bb35a;
  }

  .speed-dial {
    position: absolute;
    left: 60px;
    top: 0;
    width: 60px;
    height: 60px;
    border-radius: 50%;
    background: #50535f;
    box-shadow: 0 0 0 1px #33363d;
    color: #eceef0;
  }

  .speed-dial svg {
    position: absolute;
    left: 0;
    top: 0;
  }

  .pctnum {
    position: absolute;
    left: 11px;
    top: 12px;
    font: 26px/34px "Noto Sans", sans-serif;
  }

  .pctsign {
    position: absolute;
    left: 39px;
    top: 27px;
    font: 9px/14px "Noto Sans", sans-serif;
  }

  .ime-bar {
    position: absolute;
    left: 1800px;
    top: 1014px;
    display: flex;
    align-items: center;
    width: 120px;
    height: 26px;
    padding-left: 3px;
    box-sizing: border-box;
    background: #fff;
    color: #1d7fc4;
    border-top: 1px solid #d7e8f5;
    gap: 13px;
  }

  .ime-bar b {
    font-size: 15px;
    font-weight: 700;
  }

  .ime-comma {
    width: 4px;
    font-weight: 700;
    font-size: 14px;
    margin-left: 2px;
    margin-right: 4px;
  }

  .mark {
    position: absolute;
    left: 1765px;
    top: 986px;
    width: 155px;
    height: 54px;
    pointer-events: none;
  }

  .mark-logo {
    position: absolute;
    left: 0;
    top: -2px;
    width: 60px;
    height: 56px;
  }

  .mark-name {
    position: absolute;
    left: 38px;
    top: 1px;
    color: #2e7fd4;
    font-size: 21px;
    font-weight: 700;
    line-height: 28px;
    white-space: nowrap;
  }

  .mark-url {
    position: absolute;
    left: 34px;
    top: 30px;
    color: rgba(40, 170, 110, .7);
    font: 700 17px/22px "Liberation Sans", sans-serif;
    white-space: nowrap;
  }
</style>
